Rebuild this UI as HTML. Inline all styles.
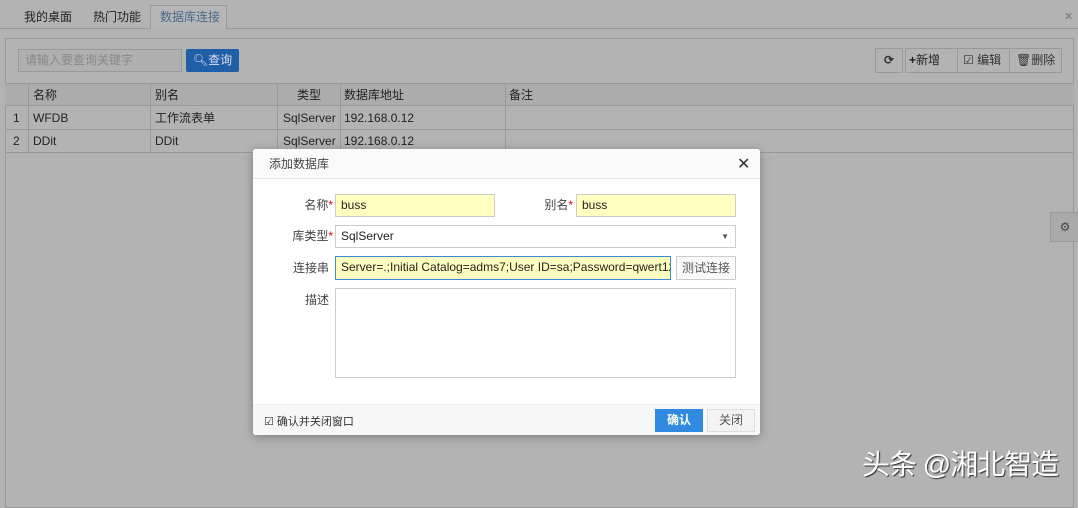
<!DOCTYPE html><html><head><meta charset="utf-8"><style>
*{box-sizing:border-box;margin:0;padding:0}
body{width:1078px;height:490px;background:#b3b3b3;font-family:"Liberation Sans","Noto Sans CJK SC",sans-serif;font-size:12px;color:#333;position:relative;overflow:hidden}
.a{position:absolute}
.tab{position:absolute;top:6px;height:23px;line-height:22px;font-size:12px;color:#222}
.cell{position:absolute;line-height:22px;font-size:12px;color:#222}
.bd{border:1px solid #9a9a9a}
.in{position:absolute;border:1px solid #ccc;background:#ffffc0;height:23px;line-height:21px;padding-left:5px;font-size:12px;color:#222}
.lb{position:absolute;width:70px;text-align:right;font-size:12px;color:#444;line-height:22px}
.lb i{color:#d00;font-style:normal}
</style></head><body>
<div class="a" style="left:0;top:28px;width:1078px;height:1px;background:#999"></div>
<div class="tab" style="left:24px">我的桌面</div>
<div class="tab" style="left:93px">热门功能</div>
<div class="a" style="left:150px;top:5px;width:77px;height:24px;border:1px solid #999;border-bottom:none;background:#b6b6b6"></div>
<div class="tab" style="left:160px;color:#4a6a8a">数据库连接</div>
<div class="a" style="left:1064px;top:10px;font-size:11px;color:#777">✕</div>
<div class="a bd" style="left:5px;top:38px;width:1069px;height:470px;border-color:#999"></div>
<div class="a" style="left:18px;top:49px;width:164px;height:23px;border:1px solid #999;background:#b0b0b0;color:#888;padding-left:6px;line-height:21px">请输入要查询关键字</div>
<div class="a" style="left:186px;top:49px;width:53px;height:23px;background:#1f5fa8;color:#dde;line-height:23px;text-align:center;border-radius:2px">🔍︎查询</div>
<div class="a" style="left:875px;top:48px;width:28px;height:25px;border:1px solid #999;text-align:center;line-height:23px;font-weight:bold">⟳</div>
<div class="a" style="left:905px;top:48px;width:157px;height:25px;border:1px solid #999"></div>
<div class="a" style="left:909px;top:48px;line-height:25px;color:#222"><b>+</b>新增</div>
<div class="a" style="left:957px;top:48px;width:1px;height:25px;background:#999"></div>
<div class="a" style="left:963px;top:48px;line-height:25px;color:#333">☑ 编辑</div>
<div class="a" style="left:1009px;top:48px;width:1px;height:25px;background:#999"></div>
<div class="a" style="left:1016px;top:48px;line-height:25px;color:#333">🗑︎删除</div>
<div class="a" style="left:5px;top:83px;width:1069px;height:23px;background:#acacac;border-top:1px solid #999;border-bottom:1px solid #999"></div>
<div class="a" style="left:5px;top:129px;width:1069px;height:1px;background:#999"></div>
<div class="a" style="left:5px;top:152px;width:1069px;height:1px;background:#999"></div>
<div class="a" style="left:28px;top:83px;width:1px;height:69px;background:#999"></div>
<div class="a" style="left:150px;top:83px;width:1px;height:69px;background:#999"></div>
<div class="a" style="left:277px;top:83px;width:1px;height:69px;background:#999"></div>
<div class="a" style="left:340px;top:83px;width:1px;height:69px;background:#999"></div>
<div class="a" style="left:505px;top:83px;width:1px;height:69px;background:#999"></div>
<div class="cell" style="left:33px;top:84px">名称</div><div class="cell" style="left:155px;top:84px">别名</div><div class="cell" style="left:297px;top:84px">类型</div><div class="cell" style="left:344px;top:84px">数据库地址</div><div class="cell" style="left:509px;top:84px">备注</div>
<div class="cell" style="left:13px;top:107px">1</div><div class="cell" style="left:33px;top:107px">WFDB</div><div class="cell" style="left:155px;top:107px">工作流表单</div><div class="cell" style="left:283px;top:107px">SqlServer</div><div class="cell" style="left:344px;top:107px">192.168.0.12</div>
<div class="cell" style="left:13px;top:130px">2</div><div class="cell" style="left:33px;top:130px">DDit</div><div class="cell" style="left:155px;top:130px">DDit</div><div class="cell" style="left:283px;top:130px">SqlServer</div><div class="cell" style="left:344px;top:130px">192.168.0.12</div>
<div class="a" style="left:1050px;top:212px;width:30px;height:30px;background:#aaa;border:1px solid #999;text-align:center;line-height:28px;color:#444">⚙</div>
<div class="a" style="left:253px;top:149px;width:507px;height:286px;background:#fff;border-radius:3px;box-shadow:0 2px 10px rgba(0,0,0,.3)"></div>
<div class="a" style="left:253px;top:149px;width:507px;height:30px;background:#fafafa;border-bottom:1px solid #e6e6e6;border-radius:3px 3px 0 0"></div>
<div class="a" style="left:269px;top:155px;font-size:12px;color:#444">添加数据库</div>
<div class="a" style="left:737px;top:154px;font-size:16px;color:#333">✕</div>
<div class="lb" style="left:263px;top:194px">名称<i>*</i></div>
<div class="in" style="left:335px;top:194px;width:160px">buss</div>
<div class="lb" style="left:503px;top:194px">别名<i>*</i></div>
<div class="in" style="left:576px;top:194px;width:160px">buss</div>
<div class="lb" style="left:263px;top:225px">库类型<i>*</i></div>
<div class="in" style="left:335px;top:225px;width:401px;background:#fff">SqlServer<span style="position:absolute;right:6px;font-size:8px;color:#555">▼</span></div>
<div class="lb" style="left:259px;top:257px">连接串</div>
<div class="in" style="left:335px;top:256px;width:336px;height:24px;border-color:#3d8ad8;white-space:nowrap;overflow:hidden">Server=.;Initial Catalog=adms7;User ID=sa;Password=qwert123</div>
<div class="a" style="left:676px;top:256px;width:60px;height:24px;border:1px solid #ccc;background:#fafafa;text-align:center;line-height:22px;color:#555">测试连接</div>
<div class="lb" style="left:259px;top:289px">描述</div>
<div class="a" style="left:335px;top:288px;width:401px;height:90px;border:1px solid #ccc"></div>
<div class="a" style="left:253px;top:404px;width:507px;height:31px;background:#f7f7f7;border-top:1px solid #eee;border-radius:0 0 3px 3px"></div>
<div class="a" style="left:264px;top:413px;font-size:11px;color:#333">☑ 确认并关闭窗口</div>
<div class="a" style="left:655px;top:409px;width:48px;height:23px;background:#2f8ae0;color:#fff;text-align:center;line-height:23px;font-weight:bold">确认</div>
<div class="a" style="left:707px;top:409px;width:48px;height:23px;border:1px solid #ddd;background:#f3f3f3;text-align:center;line-height:21px;color:#555">关闭</div>
<div class="a" style="left:862px;top:443px;font-size:28px;color:#fff;text-shadow:1px 1px 1px #333;letter-spacing:-1px">头条 @湘北智造</div>
</body></html>
